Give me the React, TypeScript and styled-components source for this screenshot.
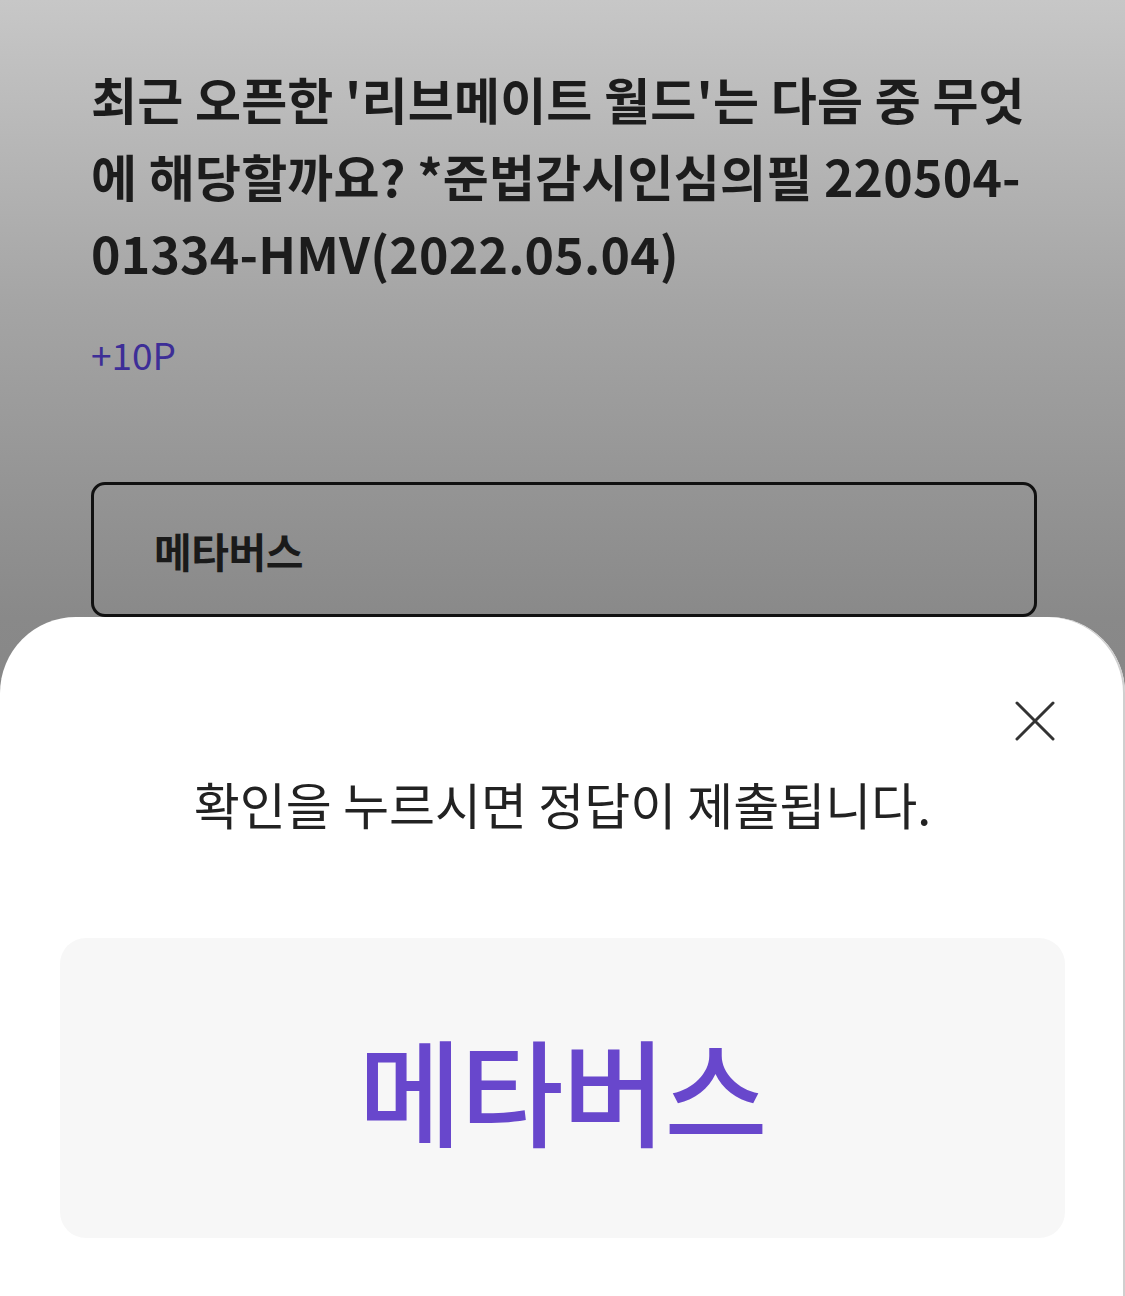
import React from "react";
import styled, { createGlobalStyle } from "styled-components";

const GlobalStyle = createGlobalStyle`
  html, body {
    margin: 0;
    padding: 0;
  }
  body {
    font-family: "Noto Sans CJK KR", "Noto Sans", sans-serif;
  }
`;

const Page = styled.div`
  position: relative;
  width: 1125px;
  height: 1296px;
  overflow: hidden;
  background: linear-gradient(
    180deg,
    #c7c7c7 0px,
    #a4a4a4 310px,
    #898989 617px,
    #777777 1296px
  );
`;

const Content = styled.div`
  display: flex;
  flex-direction: column;
  padding: 60px 88px 0 91px;
`;

const Question = styled.h1`
  margin: 0;
  font-size: 50px;
  line-height: 77px;
  font-weight: 700;
  color: #1c1c1c;
  letter-spacing: 0.2px;
  word-break: normal;
`;

const Point = styled.span`
  margin-top: 39px;
  font-size: 37px;
  line-height: 48px;
  color: #3d2e97;
`;

const Option = styled.button`
  display: flex;
  align-items: center;
  margin-top: 104px;
  height: 135px;
  padding: 0 0 0 60px;
  border: 3px solid #111;
  border-radius: 14px;
  background: transparent;
  font-family: inherit;
  font-size: 41px;
  font-weight: 700;
  color: #1a1a1a;
  letter-spacing: -0.5px;
  text-align: left;
`;

const Sheet = styled.div`
  position: absolute;
  top: 617px;
  left: 0;
  right: 0;
  bottom: 0;
  display: flex;
  flex-direction: column;
  padding: 84px 60px 0;
  background: #fff;
  border-radius: 76px 76px 0 0;
  box-shadow: inset -2px 0 0 #cfcfcf;
`;

const SheetHeader = styled.div`
  display: flex;
  justify-content: flex-end;
  padding-right: 10px;
`;

const CloseButton = styled.button`
  width: 40px;
  height: 40px;
  padding: 0;
  border: 0;
  background: none;
  display: flex;
  align-items: center;
  justify-content: center;
`;

const Message = styled.p`
  margin: 32px 0 0;
  text-align: center;
  font-size: 50px;
  line-height: 60px;
  color: #222;
`;

const AnswerBox = styled.div`
  margin-top: 105px;
  height: 300px;
  display: flex;
  align-items: center;
  justify-content: center;
  background: #f7f7f7;
  border-radius: 26px;
`;

const AnswerText = styled.span`
  font-size: 112px;
  font-weight: 500;
  color: #6847cc;
  letter-spacing: -1px;
  transform: scaleY(1.03);
`;

export default function App() {
  return (
    <>
      <GlobalStyle />
      <Page>
        <Content>
          <Question>
            최근 오픈한 '리브메이트 월드'는 다음 중 무엇에 해당할까요? *준법감시인심의필 220504-01334-HMV(2022.05.04)
          </Question>
          <Point>+10P</Point>
          <Option>메타버스</Option>
        </Content>
        <Sheet>
          <SheetHeader>
            <CloseButton aria-label="닫기">
              <svg width="40" height="40" viewBox="0 0 40 40">
                <path
                  d="M2 2 L38 38 M38 2 L2 38"
                  stroke="#333"
                  strokeWidth="3"
                  strokeLinecap="round"
                  fill="none"
                />
              </svg>
            </CloseButton>
          </SheetHeader>
          <Message>확인을 누르시면 정답이 제출됩니다.</Message>
          <AnswerBox>
            <AnswerText>메타버스</AnswerText>
          </AnswerBox>
        </Sheet>
      </Page>
    </>
  );
}
